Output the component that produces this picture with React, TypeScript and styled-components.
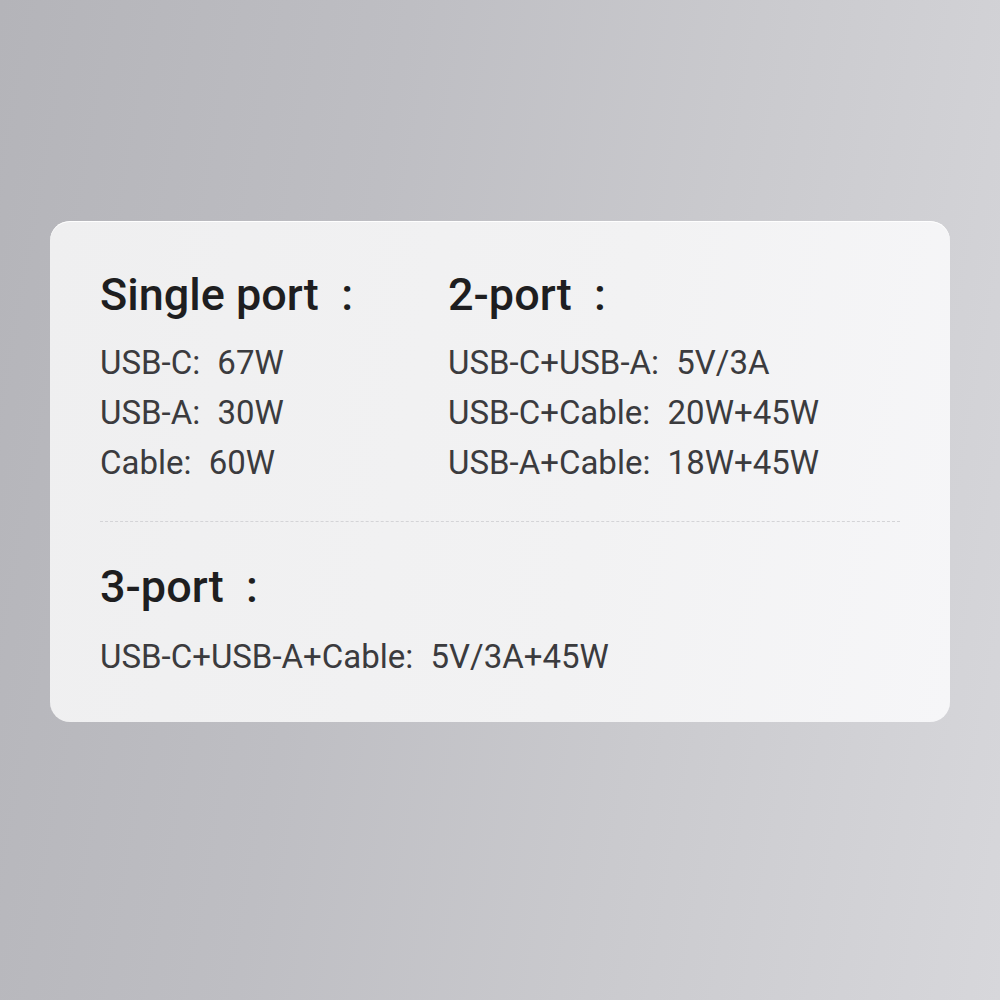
import React from "react"
import styled, { createGlobalStyle } from "styled-components"

const GlobalStyle = createGlobalStyle`
  html, body {
    margin: 0;
    padding: 0;
  }
  body {
    font-family: Roboto, "Noto Sans CJK SC", sans-serif;
  }
`

const Page = styled.div`
  width: 1000px;
  height: 1000px;
  box-sizing: border-box;
  padding: 221px 50px 0;
  background: linear-gradient(100deg, #b4b4b9 0%, #bebec3 35%, #cacace 65%, #d7d7db 100%);
  overflow: hidden;
`

const Card = styled.section`
  height: 501px;
  box-sizing: border-box;
  padding: 0 50px;
  border-radius: 20px;
  background: linear-gradient(100deg, #efeff0 0%, #f2f2f3 60%, #f6f6f8 100%);
  box-shadow: inset 0 1px 0 rgba(255, 255, 255, 0.9);
  display: flex;
  flex-direction: column;
`

const Columns = styled.div`
  display: grid;
  grid-template-columns: 348px 1fr;
  padding-top: 48px;
`

const Group = styled.div`
  display: flex;
  flex-direction: column;
`

const Title = styled.h2<{ $top?: number }>`
  margin: ${p => p.$top || 0}px 0 0;
  font-size: 45px;
  line-height: 52px;
  font-weight: 500;
  color: #1e1e20;
  white-space: pre;
`

const Specs = styled.ul<{ $top: number }>`
  list-style: none;
  margin: ${p => p.$top}px 0 0;
  padding: 0;
`

const Spec = styled.li`
  font-size: 33px;
  line-height: 50px;
  color: #3b3b3e;
  white-space: pre;
  word-spacing: 9px;
`

const Divider = styled.hr`
  margin: 33px 0 0;
  border: none;
  border-top: 1px dashed #d4d4d7;
`

const single = ["USB-C: 67W", "USB-A: 30W", "Cable: 60W"]
const dual = ["USB-C+USB-A: 5V/3A", "USB-C+Cable: 20W+45W", "USB-A+Cable: 18W+45W"]

export default function App() {
  return (
    <>
      <GlobalStyle />
      <Page>
        <Card>
          <Columns>
            <Group>
              <Title>{"Single port  :"}</Title>
              <Specs $top={17}>
                {single.map(s => (
                  <Spec key={s}>{s}</Spec>
                ))}
              </Specs>
            </Group>
            <Group>
              <Title>{"2-port  :"}</Title>
              <Specs $top={17}>
                {dual.map(s => (
                  <Spec key={s}>{s}</Spec>
                ))}
              </Specs>
            </Group>
          </Columns>
          <Divider />
          <Group>
            <Title $top={39}>{"3-port  :"}</Title>
            <Specs $top={19}>
              <Spec>USB-C+USB-A+Cable: 5V/3A+45W</Spec>
            </Specs>
          </Group>
        </Card>
      </Page>
    </>
  )
}
